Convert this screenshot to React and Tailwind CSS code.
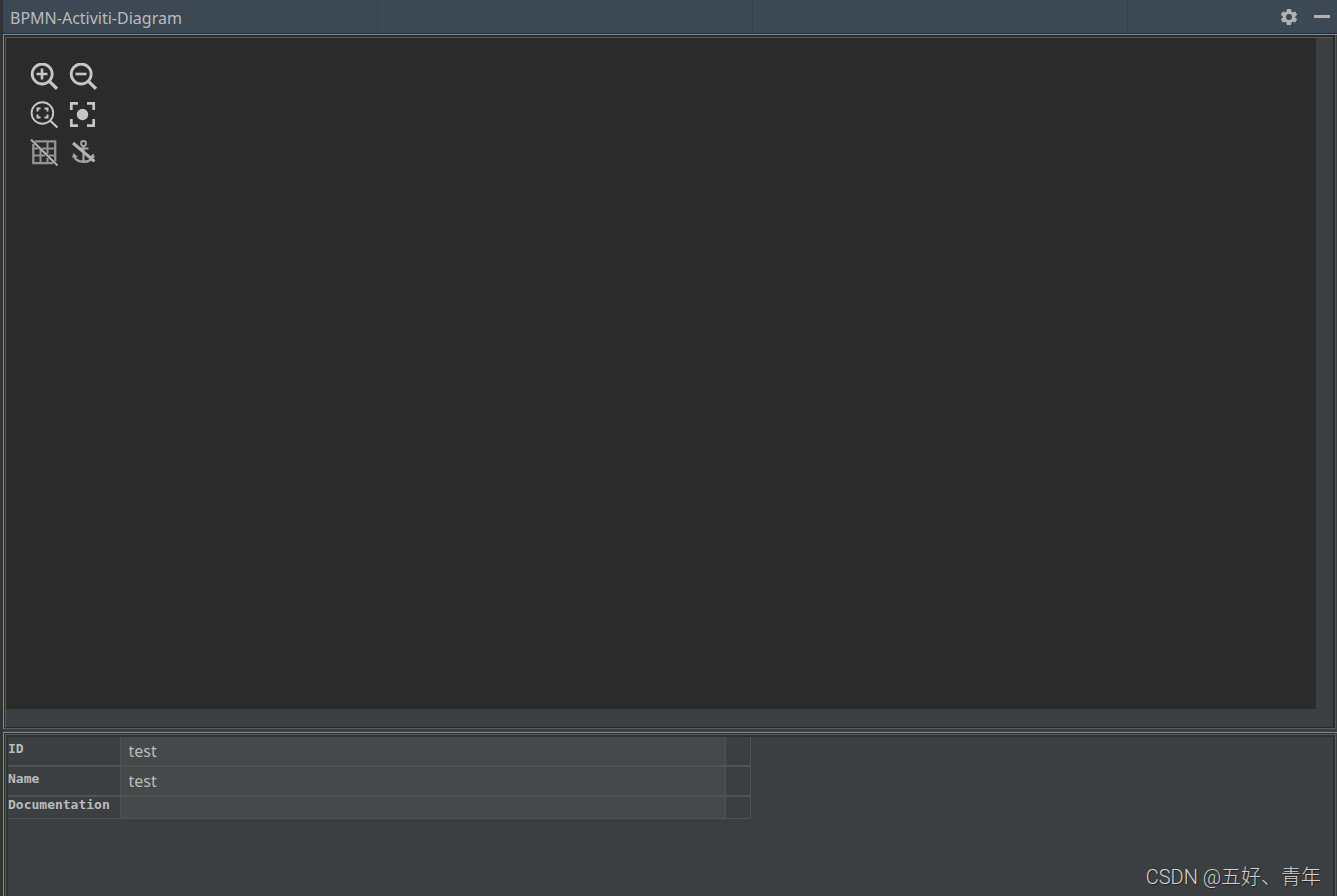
import React from "react";

function Tool({ label, children }) {
  return (
    <button type="button" aria-label={label} className="size-7 text-[#c6c6c6]">
      <svg viewBox="0 0 28 28" className="size-7" fill="none" stroke="currentColor">
        {children}
      </svg>
    </button>
  );
}

const rows = [
  { id: "id", label: "ID", value: "test", height: "h-7", pad: "pt-1" },
  { id: "name", label: "Name", value: "test", height: "h-7", pad: "pt-1" },
  { id: "documentation", label: "Documentation", value: "", height: "h-[21px]", pad: "pt-0" },
];

function Header() {
  return (
    <header className="relative flex h-[33px] shrink-0 items-center justify-between bg-[#3d4855] pr-[7px] pl-[7px]">
      <div aria-hidden="true" className="absolute inset-0 flex overflow-hidden">
        <span className="w-[375px] shrink-0 border-r border-[#354150]" />
        <span className="w-[375px] shrink-0 border-r border-[#354150]" />
        <span className="w-[375px] shrink-0 border-r border-[#354150]" />
      </div>
      <h1 className="relative pt-0.5 text-[16px] leading-6 text-[#bbbbbb]">BPMN-Activiti-Diagram</h1>
      <div className="relative flex items-center gap-4 text-[#afb1b3]">
        <button type="button" aria-label="Settings" className="size-[18px]">
          <svg viewBox="0 0 18 18" className="size-[18px]" fill="currentColor">
            <path
              fillRule="evenodd"
              d="M7 1h4l.5 2.4 1.3.8 2.4-.8 2 3.4-1.9 1.5v1.4l1.9 1.5-2 3.4-2.4-.8-1.3.8L11 17H7l-.5-2.4-1.3-.8-2.4.8-2-3.4 1.9-1.5V8.3L.8 6.8l2-3.4 2.4.8 1.3-.8ZM9 6a3 3 0 1 0 0 6a3 3 0 0 0 0-6Z"
            />
          </svg>
        </button>
        <button type="button" aria-label="Hide" className="flex h-[18px] w-4 items-center">
          <span className="h-[3px] w-4 bg-[#afb1b3]" />
        </button>
      </div>
    </header>
  );
}

function Toolbar() {
  return (
    <div role="toolbar" aria-label="Diagram tools" className="grid w-max grid-cols-2 gap-x-[11px] gap-y-[10px] pt-[25px] pl-6">
      <Tool label="Zoom in">
        <circle cx="12.2" cy="11" r="10" strokeWidth="2.8" />
        <path d="M19.2 18.2l7.8 7.6" strokeWidth="3.2" />
        <path d="M6.5 11h11M12 5.5v11" strokeWidth="2.6" />
      </Tool>
      <Tool label="Zoom out">
        <circle cx="12.2" cy="11" r="10" strokeWidth="2.8" />
        <path d="M19.2 18.2l7.8 7.6" strokeWidth="3.2" />
        <path d="M6.5 11h11" strokeWidth="2.6" />
      </Tool>
      <Tool label="Fit content">
        <circle cx="12.4" cy="12" r="10.8" strokeWidth="1.9" />
        <path d="M20 19.5l7.5 7" strokeWidth="2.3" />
        <path d="M7.5 10.5v-3h3M14.500 7.500h3v3M17.500 13.500v3h-3M10.500 16.500h-3v-3" strokeWidth="2" />
      </Tool>
      <Tool label="Actual size">
        <path d="M2.300 9V2.300H9M18 2.300h6.700V9M24.700 18v6.700H18M9 24.700H2.300V18" strokeWidth="2.700" />
        <circle cx="13.500" cy="13.500" r="5.700" fill="currentColor" stroke="none" />
      </Tool>
      <Tool label="Toggle grid">
        <g stroke="#949494">
          <path d="M5 2.300h20.200v20M3.300 5v19.200H23" strokeWidth="2.300" />
          <path d="M10.500 10v14M17.500 2v13M17.500 19v5M3 9.500h5M12 9.500h13M3 16.500h12M19 16.500h6" strokeWidth="2" />
        </g>
        <path d="M1 .500L27.500 26.500" stroke="#b0b0b0" strokeWidth="2.100" />
      </Tool>
      <Tool label="Toggle anchors">
        <g stroke="#a3a3a3">
          <circle cx="14.500" cy="4.500" r="2.500" strokeWidth="1.900" />
          <path d="M14.500 7v16M9.500 9.500h10" strokeWidth="2.200" />
          <path d="M5 16.500c1 4 4.500 6.300 9.500 6.300s8.500-2 9.700-6" strokeWidth="2.500" />
        </g>
        <path d="M3 18.500L4.500 14l4.500 4ZM20 18l4.500-3.500L26 18.500Z" fill="#a3a3a3" stroke="none" />
        <path d="M4 4L25.500 22.300" stroke="#b4b4b4" strokeWidth="3" />
      </Tool>
    </div>
  );
}

function Properties() {
  return (
    <table className="w-[742px] table-fixed border-collapse">
      <colgroup>
        <col className="w-[112px]" />
        <col className="w-[605px]" />
        <col className="w-[25px]" />
      </colgroup>
      <tbody>
        {rows.map((row, i) => (
          <tr key={row.id} className={i < 2 ? "border-b-2 border-[#505254]" : "border-b border-[#505254]"}>
            <th scope="row" className="border-r border-[#505254] p-0 text-left align-top">
              <label
                htmlFor={row.id}
                className={`block font-['DejaVu_Sans_Mono',monospace] text-[13px] leading-4 font-bold text-[#bbbbbb] ${row.pad}`}
              >
                {row.label}
              </label>
            </th>
            <td className="border-r border-[#505254] bg-[#45494a] p-0">
              <input
                id={row.id}
                defaultValue={row.value}
                className={`block w-full bg-transparent px-2 text-[16px] text-[#bbbbbb] outline-none ${row.height}`}
              />
            </td>
            <td className="border-r border-[#505254] p-0" />
          </tr>
        ))}
      </tbody>
    </table>
  );
}

export default function App() {
  return (
    <div className="flex h-screen flex-col overflow-hidden bg-[#3c3f41] font-['Noto_Sans','Noto_Sans_CJK_SC',sans-serif]">
      <div className="flex min-h-0 flex-1 border-l-[3px] border-[#313335]">
        <div className="flex min-w-0 flex-1 flex-col">
          <Header />
          <div className="h-px shrink-0 bg-[#2b2d30]" />
          <main className="flex min-h-0 flex-1 flex-col border-t border-l border-[#7c8b99]">
            <section
              aria-label="Diagram"
              className="mr-px flex min-h-0 flex-1 border-r border-b border-[#5a5d5f]"
            >
              <div className="flex flex-1 border-t-2 border-r-2 border-b border-l border-[#2b2b2b]">
                <div className="flex flex-1 border-t border-l border-[#5a5d5f]">
                  <div className="mr-[17px] mb-[18px] flex-1 bg-[#2b2b2b]">
                    <Toolbar />
                  </div>
                </div>
              </div>
            </section>
          </main>
          <div className="h-[3px] shrink-0" />
          <section aria-label="Properties" className="flex h-[164px] shrink-0 border-t border-l border-[#7c8b99]">
            <div className="mr-px flex flex-1 border-t border-r border-l border-t-[#2b2b2b] border-r-[#5a5d5f] border-l-[#2b2b2b]">
              <div className="flex flex-1 border-t border-l border-[#5a5d5f]">
                <div className="flex flex-1 flex-col justify-between border-t-2 border-r-2 border-l-2 border-[#313131]">
                  <Properties />
                  <p className="self-end pr-3 pb-[3px] font-['Roboto','Noto_Sans_CJK_SC',sans-serif] text-[20px] leading-8 font-light text-[#d0d2d3] [text-shadow:1px_1px_1px_#222]">
                    CSDN @五好、青年
                  </p>
                </div>
              </div>
            </div>
          </section>
        </div>
      </div>
    </div>
  );
}
